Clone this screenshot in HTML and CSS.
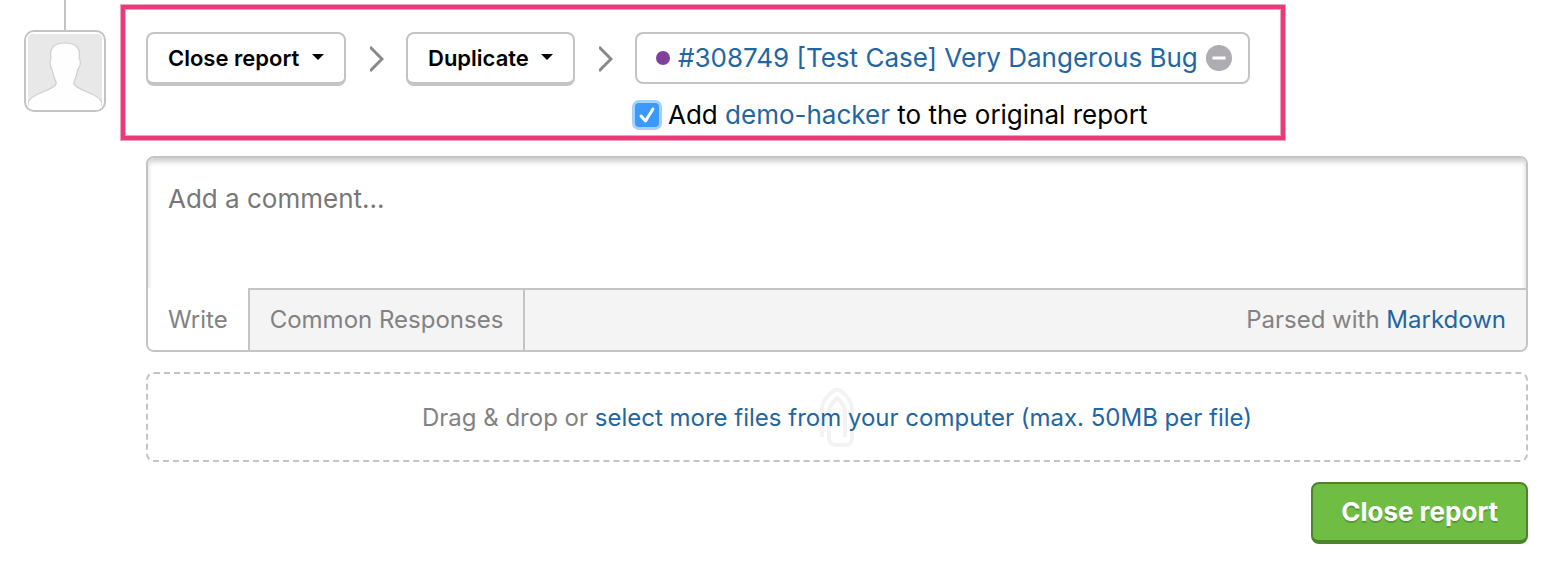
FILE: index.html
```html
<!DOCTYPE html>
<html lang="en">
<head>
<meta charset="utf-8">
<meta name="viewport" content="width=device-width, initial-scale=1">
<title>Close report</title>
<link rel="stylesheet" href="styles.css">
</head>
<body>
<main class="page">
  <div class="timeline">
    <div class="timeline-line"></div>
    <div class="avatar">
      <svg viewBox="0 0 74 74" role="img" aria-label="Your avatar">
        <rect width="74" height="74" rx="4" fill="#e8e8e8"/>
        <path d="M0 74V69C1 64 7 61 15 58C22 55 27 53 28 50C29 48 27 46 26 43L24 35C21 32 22 27 23 24C21 14 26 9 37 9C48 9 53 14 51 24C53 27 53 32 50 35L48 43C47 46 45 48 46 50C47 53 52 55 59 58C67 61 73 64 74 69V74Z" fill="#fefefe" stroke="#cfcfcf" stroke-width="1.2"/>
        <path d="M0 72V76H74V72" fill="#fefefe"/>
      </svg>
    </div>
  </div>
  <form class="content">
    <section class="highlight" aria-label="Close action">
      <div class="picker">
        <select class="picker-select" aria-label="Action"><option>Close report</option></select>
        <svg class="picker-caret" viewBox="0 0 12 6" aria-hidden="true"><path d="M0 0H12L6 6Z"/></svg>
      </div>
      <svg class="chevron" viewBox="0 0 14 26" aria-hidden="true"><path d="M0 1L12 13L0 25"/></svg>
      <div class="picker">
        <select class="picker-select" aria-label="Reason"><option>Duplicate</option></select>
        <svg class="picker-caret" viewBox="0 0 12 6" aria-hidden="true"><path d="M0 0H12L6 6Z"/></svg>
      </div>
      <svg class="chevron" viewBox="0 0 14 26" aria-hidden="true"><path d="M0 1L12 13L0 25"/></svg>
      <div class="original">
        <div class="report">
          <span class="report-dot"></span>
          <a class="link" href="#308749">#308749 [Test Case] Very Dangerous Bug</a>
          <button class="remove" type="button" aria-label="Remove report">
            <svg viewBox="0 0 26 26" aria-hidden="true"><circle cx="13" cy="13" r="13" fill="#aeacb0"/><path d="M6.500 13H19.500" stroke="#fff" stroke-width="3"/></svg>
          </button>
        </div>
        <div class="invite">
          <input class="check" type="checkbox" id="invite" checked>
          <svg class="check-mark" viewBox="0 0 24 24" aria-hidden="true"><path d="M6 13L10.500 18L18 6"/></svg>
          <label for="invite">Add <a class="link" href="#demo-hacker">demo-hacker</a> to the original report</label>
        </div>
      </div>
    </section>
    <div class="body">
      <div class="composer">
        <textarea class="comment" aria-label="Comment" placeholder="Add a comment..."></textarea>
        <div class="tabs">
          <button class="tab tab-active" type="button">Write</button>
          <button class="tab tab-idle" type="button">Common Responses</button>
          <span class="parsed">Parsed with <a class="link" href="#markdown">Markdown</a></span>
        </div>
      </div>
      <div class="dropzone">
        <svg class="clip" viewBox="0 0 34 60" aria-hidden="true"><path d="M2 50V22C2 15 8 8 13 4C16 2 18 2 21 4C26 8 32 15 32 22V51C32 55 29 58 25 58H16C12 58 9 55 9 51V24C9 19 13 15 17 11C21 15 25 19 25 24V50"/></svg>
        <p class="dropzone-text">Drag &amp; drop or <a class="link" href="#files">select more files from your computer (max. 50MB per file)</a></p>
      </div>
      <button class="submit" type="submit">Close report</button>
    </div>
  </form>
</main>
</body>
</html>
```

FILE: styles.css
```css
* {
  box-sizing: border-box;
}

body {
  margin: 0;
  background: #fff;
  color: #000;
  font-family: Inter, "Liberation Sans", sans-serif;
  font-size: 24px;
  line-height: 32px;
}

button,
select,
textarea {
  margin: 0;
  font: inherit;
}

.link {
  color: #1f66a3;
  text-decoration: none;
}

.page {
  display: flex;
  gap: 15px;
  padding: 0 30px 28px 24px;
}

.timeline {
  flex: none;
  display: flex;
  flex-direction: column;
  align-items: center;
  width: 82px;
}

.timeline-line {
  width: 2px;
  height: 30px;
  background: #c4c4c4;
}

.avatar {
  width: 82px;
  height: 82px;
  padding: 2px;
  border: 2px solid #c4c4c4;
  border-radius: 10px;
}

.avatar svg {
  display: block;
}

.content {
  flex: 1;
  min-width: 0;
  padding-top: 5px;
}

.highlight {
  display: flex;
  align-items: flex-start;
  width: fit-content;
  padding: 23px 31px 5px 21px;
  border: 4px solid #e73b7a;
  box-shadow: 0 0 0 1px #f3a0be, inset 0 0 0 1px #f3a0be;
}

.picker {
  display: grid;
  align-items: center;
}

.picker-select {
  grid-area: 1 / 1;
  height: 54px;
  padding: 0 44px 0 20px;
  appearance: none;
  background: #fff;
  border: 2px solid #c4c4c4;
  border-bottom-width: 4px;
  border-radius: 8px;
  color: #000;
  font-size: 22px;
  font-weight: 600;
}

.picker-caret {
  grid-area: 1 / 1;
  justify-self: end;
  width: 12px;
  height: 6px;
  margin: 0 22px 4px 0;
  pointer-events: none;
}

.chevron {
  flex: none;
  width: 14px;
  height: 26px;
  margin: 14px 22px 0 24px;
  fill: none;
  stroke: #8a8888;
  stroke-width: 3;
}

.report {
  display: flex;
  align-items: center;
  height: 52px;
  padding: 0 16px 0 19px;
  border: 2px solid #c4c4c4;
  border-radius: 8px;
  font-size: 26px;
}

.report-dot {
  width: 14px;
  height: 14px;
  margin-right: 8px;
  border-radius: 7px;
  background: #823f9c;
}

.remove {
  width: 26px;
  height: 26px;
  margin-left: 8px;
  padding: 0;
  border: 0;
  background: none;
}

.remove svg {
  display: block;
}

.invite {
  display: grid;
  grid-template-columns: 24px auto;
  column-gap: 9px;
  align-items: center;
  justify-content: start;
  margin-top: 15px;
  font-size: 26px;
}

.check {
  grid-area: 1 / 1;
  width: 24px;
  height: 24px;
  margin: 0;
  appearance: none;
  border-radius: 4px;
  background: #3b99fc;
  box-shadow: 0 0 0 3px #a1d2f8;
}

.check-mark {
  grid-area: 1 / 1;
  fill: none;
  stroke: #fff;
  stroke-width: 3;
  stroke-linecap: round;
  stroke-linejoin: round;
  pointer-events: none;
}

.body {
  display: flex;
  flex-direction: column;
  gap: 20px;
  padding: 16px 0 0 25px;
}

.composer {
  overflow: hidden;
  border: 2px solid #c4c4c4;
  border-radius: 8px;
}

.comment {
  display: block;
  width: 100%;
  height: 130px;
  padding: 25px 20px;
  border: 0;
  outline: 0;
  resize: none;
  background: #fff;
  box-shadow: inset 0 4px 5px #d0d0d0;
  font-size: 26px;
}

.comment::placeholder {
  color: #777;
  opacity: 1;
}

.tabs {
  display: flex;
  height: 62px;
  background: #f4f4f4;
}

.tab {
  padding: 2px 20px 0;
  border: 0;
  color: #828282;
}

.tab-active {
  background: #fff;
}

.tab-idle {
  padding-top: 0;
  border: 2px solid #c4c4c4;
  border-bottom: 0;
  background: #f4f4f4;
}

.parsed {
  flex: 1;
  padding: 14px 20px 0 0;
  border-top: 2px solid #c4c4c4;
  color: #828282;
  text-align: right;
}

.dropzone {
  display: grid;
  place-items: center;
  height: 90px;
  border: 2px dashed #c4c4c4;
  border-radius: 8px;
}

.clip {
  grid-area: 1 / 1;
  width: 34px;
  height: 60px;
  fill: none;
  stroke: #f3f3f3;
  stroke-width: 4;
}

.dropzone-text {
  grid-area: 1 / 1;
  margin: 0;
  padding-top: 2px;
  color: #828282;
}

.submit {
  align-self: flex-end;
  height: 62px;
  padding: 0 28px;
  border: 2px solid #4b842d;
  border-bottom-width: 4px;
  border-radius: 8px;
  background: #70bd43;
  color: #fff;
  font-size: 26px;
  font-weight: 700;
  text-shadow: 0 2px 0 #57983a;
}
```
